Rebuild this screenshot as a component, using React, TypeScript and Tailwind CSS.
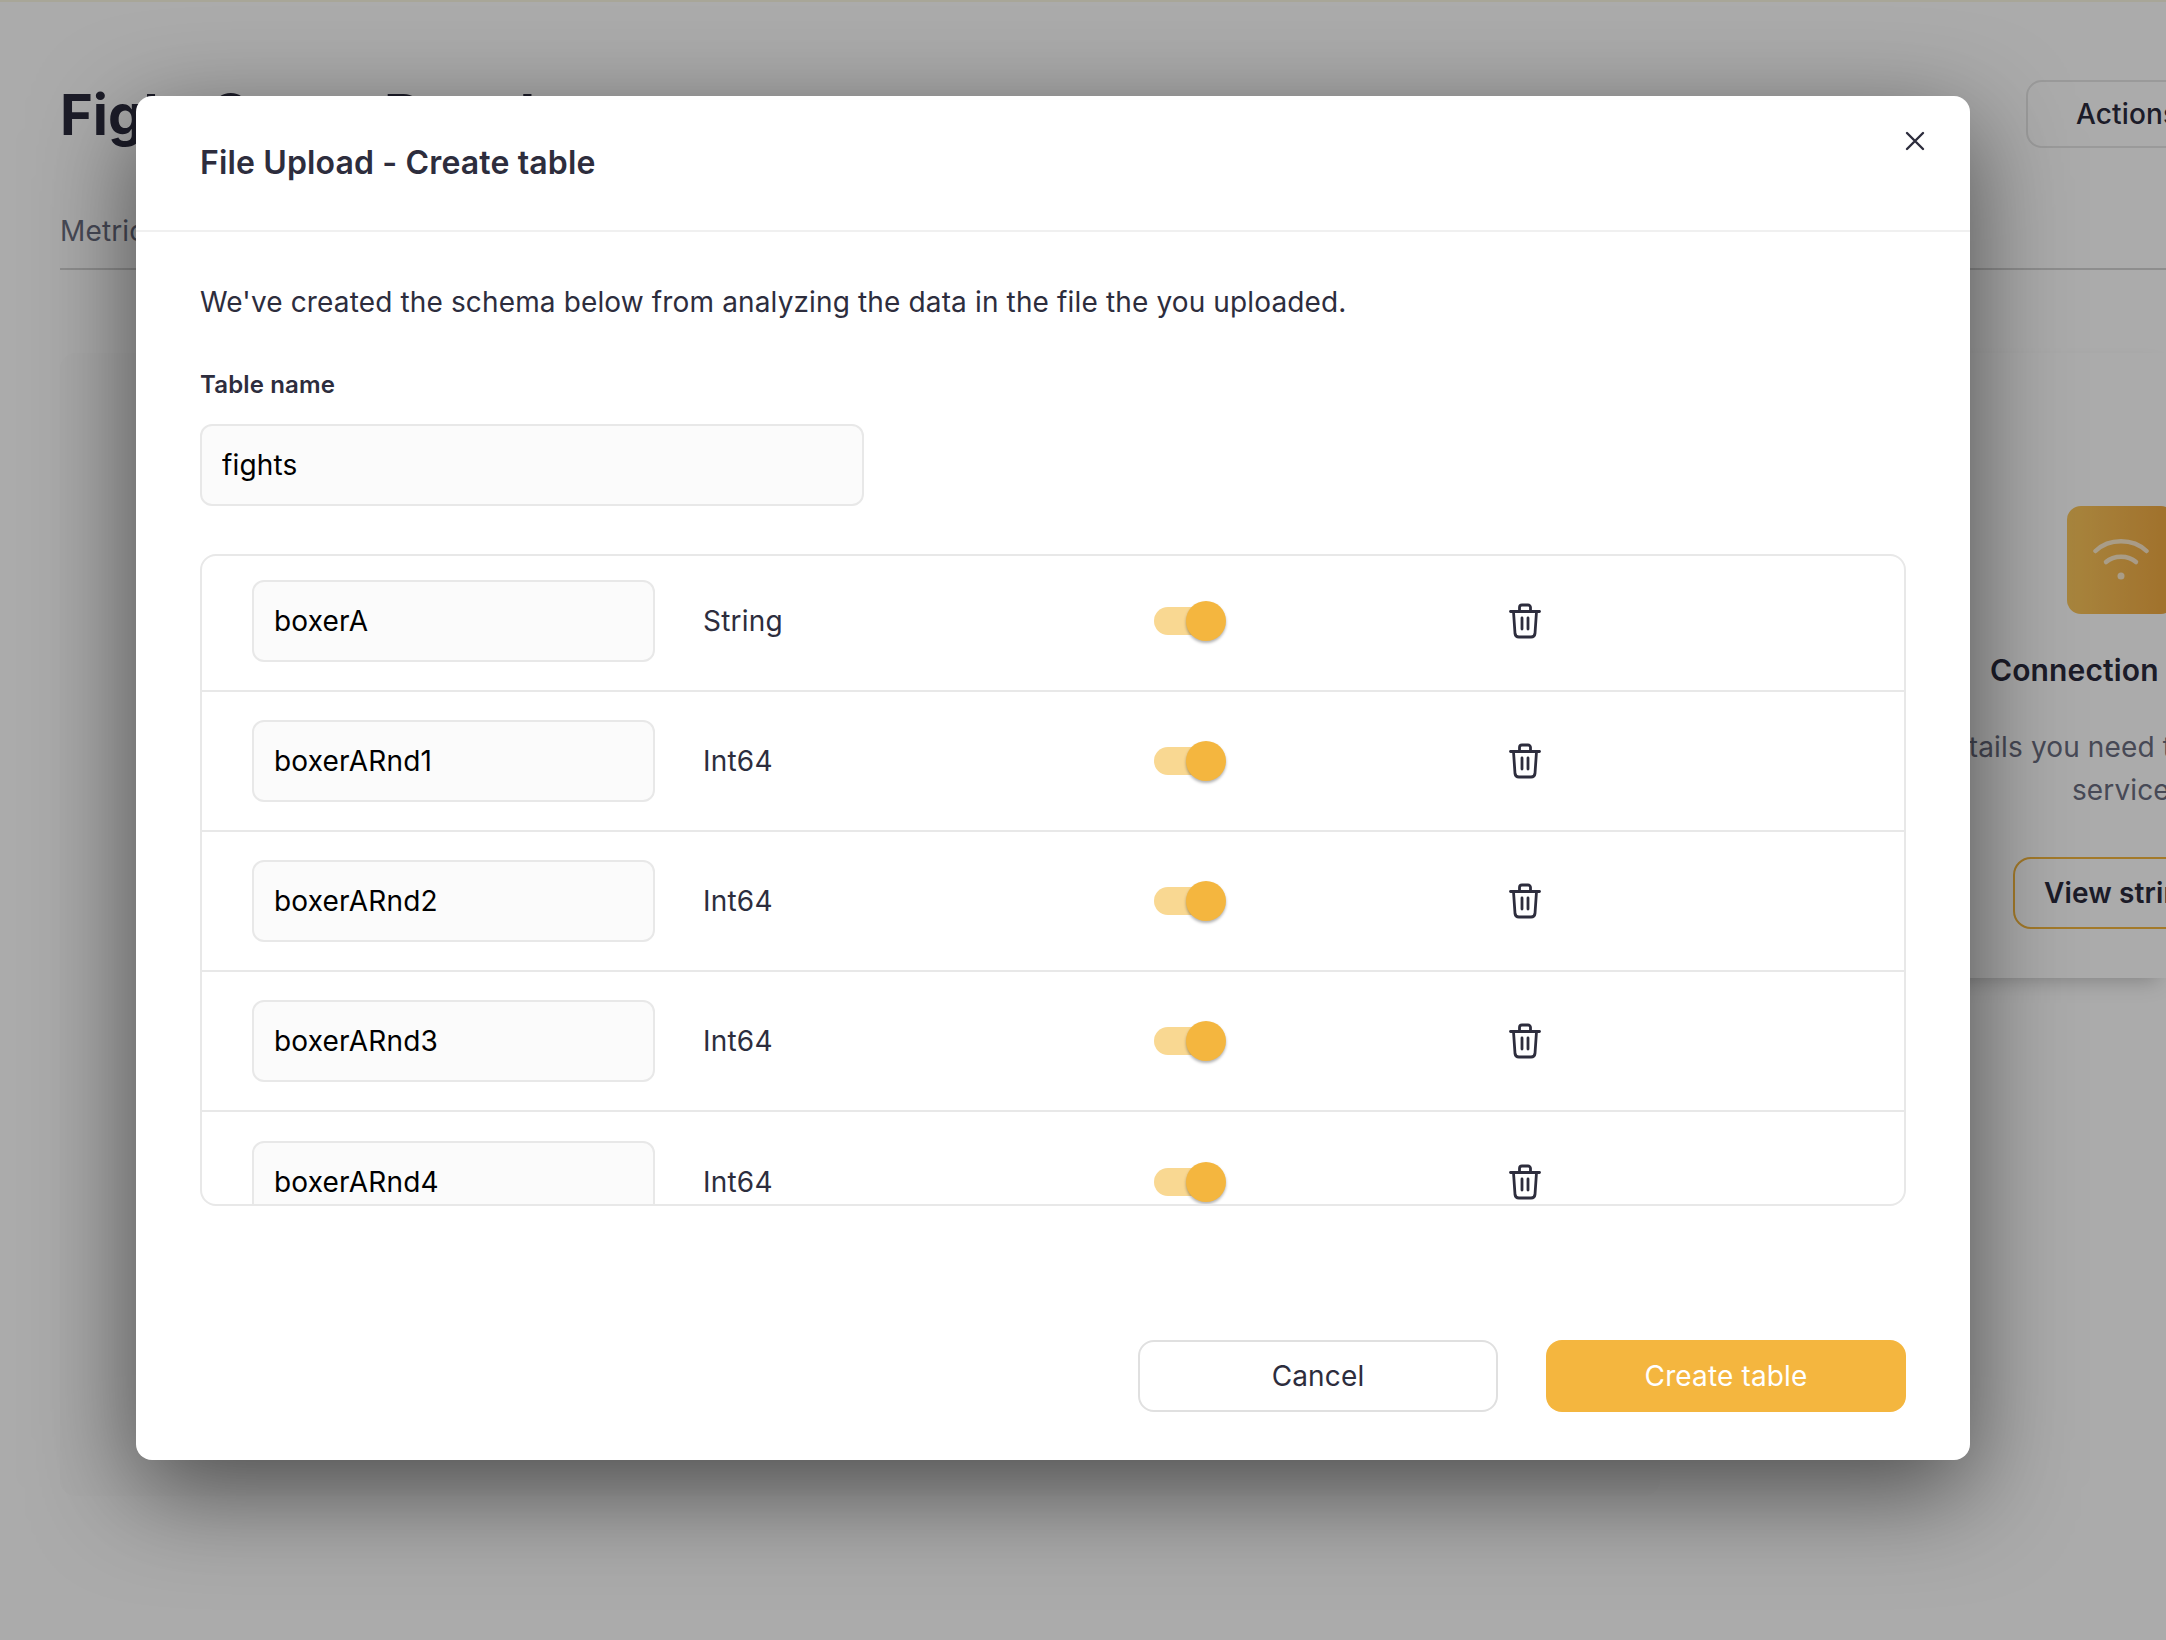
import React from 'react';

const columns = [
  { name: 'boxerA', type: 'String' },
  { name: 'boxerARnd1', type: 'Int64' },
  { name: 'boxerARnd2', type: 'Int64' },
  { name: 'boxerARnd3', type: 'Int64' },
  { name: 'boxerARnd4', type: 'Int64' },
];

const TrashIcon = () => (
  <svg width="32" height="36" viewBox="0 0 32 36" fill="none" stroke="#2d2d3d" strokeWidth="2.8" strokeLinecap="round" strokeLinejoin="round">
    <path d="M1.5 8.5h29" />
    <path d="M10.5 8.5V4.5a2.5 2.5 0 0 1 2.5-2.5h6a2.5 2.5 0 0 1 2.5 2.5v4" />
    <path d="M4.5 8.5l1.5 22a4 4 0 0 0 4 3.5h12a4 4 0 0 0 4-3.5l1.5-22" />
    <path d="M13 15v11M19 15v11" />
  </svg>
);

const CloseIcon = () => (
  <svg width="20" height="20" viewBox="0 0 20 20" fill="none" stroke="#2d2d3d" strokeWidth="2.4" strokeLinecap="round">
    <path d="M2 2l16 16M18 2L2 18" />
  </svg>
);

const WifiIcon = () => (
  <svg width="56" height="44" viewBox="0 0 56 44" fill="none" stroke="#ffffff" strokeOpacity="0.7" strokeWidth="4.5" strokeLinecap="round">
    <path d="M2.5 13C16 0 40 0 53.5 13" />
    <path d="M13 24c8-7 22-7 30 0" />
    <circle cx="28" cy="38" r="3.5" fill="#ffffff" fillOpacity="0.7" stroke="none" />
  </svg>
);

const Toggle = () => (
  <div className="relative h-[40px] w-[72px] flex items-center">
    <div className="h-[28px] w-[58px] rounded-full bg-[#f9d892]" />
    <div className="absolute right-0 top-0 h-[40px] w-[40px] rounded-full bg-[#f4b63f] shadow-[0_2px_3px_rgba(0,0,0,0.3)]" />
  </div>
);

const Row = ({ name, type, last }: { name: string; type: string; last: boolean }) => (
  <div className={`grid grid-cols-[451px_451px_355px_auto] items-center h-[140px] pl-[50px] ${last ? '' : 'border-b-2 border-[#e8e8e8]'}`}>
    <input
      readOnly
      value={name}
      className="w-[403px] h-[82px] rounded-[12px] border-2 border-[#e8e8e8] bg-[#fbfbfb] pl-[20px] text-[28px] tracking-[0.2px] text-black outline-none"
    />
    <span className="text-[28px] tracking-[0.2px] text-[#2d2d3d]">{type}</span>
    <Toggle />
    <TrashIcon />
  </div>
);

const App = () => {
  return (
    <div className="relative w-[2166px] h-[1640px] overflow-hidden bg-white font-[Inter,sans-serif] tracking-[0.14px]">
      <div className="h-[2px] bg-[#fbf8e3]" />
      <div className="w-[2166px] px-[60px]">
        <div className="flex items-start justify-between pt-[78px]">
          <h1 className="text-[56px] leading-[70px] font-bold tracking-normal text-[#2b2b3c] whitespace-nowrap">Fight Score Results</h1>
          <button className="shrink-0 w-[200px] -mr-[120px] h-[68px] rounded-[16px] border-2 border-[#e6e6e6] pl-[48px] text-left text-[28px] font-medium text-[#2b2b3c]">
            Actions
          </button>
        </div>
        <div className="mt-[61px] h-[59px] border-b-2 border-[#d4d4d4] mr-[-60px]">
          <span className="text-[28px] leading-[40px] text-[#6b6e80]">Metrics</span>
        </div>
        <div className="mt-[83px] mr-[-60px] flex items-start gap-[40px]">
          <div className="h-[1143px] w-[1600px] shrink-0 rounded-[16px] bg-[#fcfcfc]" />
          <div className="flex h-[625px] flex-1 justify-end bg-white shadow-[0_10px_20px_-8px_rgba(0,0,0,0.25)]">
            <div className="shrink-0 w-[700px] -mr-[306px] pt-[153px] flex flex-col items-center text-center">
              <div className="mr-[2px] flex h-[108px] w-[108px] items-center justify-center rounded-[14px] bg-gradient-to-r from-[#fbc75d] to-[#efa73f]">
                <WifiIcon />
              </div>
              <h3 className="mt-[36px] pl-[14px] text-[30px] leading-[40px] font-semibold text-[#2b2b3c]">Connection strings</h3>
              <p className="mt-[36px] pl-[6px] text-[28px] leading-[43px] text-[#6b6e80]">All the details you need to connect to your<br />service.</p>
              <button className="mt-[45px] ml-[14px] h-[72px] w-[232px] shrink-0 rounded-[18px] border-2 border-[#f4b63f] text-[28px] font-semibold text-[#2b2b3c]">
                View strings
              </button>
            </div>
          </div>
        </div>
      </div>

      <div className="absolute inset-0 bg-black/33">
        <div className="absolute left-[136px] top-[96px] w-[1834px] h-[1364px] rounded-[16px] bg-white shadow-[0_30px_100px_rgba(0,0,0,0.55)]">
          <div className="flex h-[136px] items-center border-b-2 border-[#f0f0f0] pl-[64px]">
            <h2 className="text-[32px] font-semibold text-[#2d2d3d]">File Upload - Create table</h2>
          </div>
          <button className="absolute right-[45px] top-[35px]">
            <CloseIcon />
          </button>
          <div className="px-[64px]">
            <p className="pt-[49px] text-[28px] leading-[42px] text-[#2d2d3d]">
              We've created the schema below from analyzing the data in the file the you uploaded.
            </p>
            <label className="mt-[46px] block text-[24px] leading-[32px] font-semibold text-[#2d2d3d]">Table name</label>
            <input
              readOnly
              value="fights"
              className="mt-[23px] block h-[82px] w-[664px] rounded-[12px] border-2 border-[#e8e8e8] bg-[#fbfbfb] pl-[20px] text-[28px] text-black outline-none"
            />
            <div className="mt-[48px] h-[652px] overflow-hidden rounded-[16px] border-2 border-[#e8e8e8]">
              <div className="-mt-[4px]">
                {columns.map((c, i) => (
                  <Row key={c.name} name={c.name} type={c.type} last={i === columns.length - 1} />
                ))}
              </div>
            </div>
            <div className="mt-[134px] flex justify-end gap-[48px]">
              <button className="h-[72px] w-[360px] rounded-[16px] border-2 border-[#e0e0e0] bg-white text-[28px] text-[#2d2d3d]">Cancel</button>
              <button className="h-[72px] w-[360px] rounded-[16px] bg-[#f4b63f] text-[28px] text-white">Create table</button>
            </div>
          </div>
        </div>
      </div>
    </div>
  );
};

export default App;
